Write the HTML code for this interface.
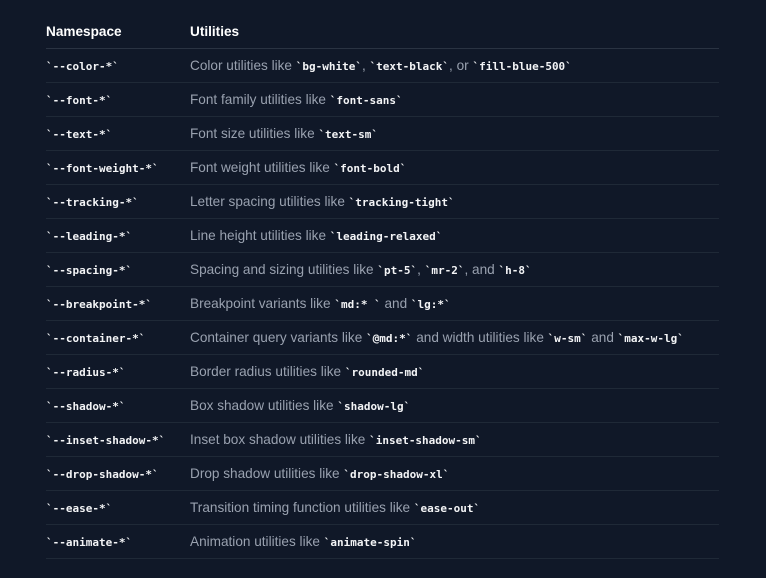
<!DOCTYPE html>
<html><head><meta charset="utf-8"><style>
html,body{margin:0;background:#101828;width:766px;height:578px;overflow:hidden}
table{position:absolute;left:46px;top:14px;width:673px;border-collapse:collapse;font-family:"Liberation Sans",sans-serif;font-size:13.6px;color:#99a1af}
th{color:#fff;font-weight:bold;text-align:left;height:34px;padding:0;border-bottom:1px solid #2a3342;vertical-align:middle}
td{height:33px;padding:0;border-bottom:1px solid #1f2937;vertical-align:middle}
td:first-child,th:first-child{width:144px}
code{font-family:"DejaVu Sans Mono",monospace;font-size:11px;font-weight:bold;color:#f3f4f6}
</style></head><body>
<table>
<tr><th>Namespace</th><th>Utilities</th></tr>
<tr><td><code>`--color-*`</code></td><td>Color utilities like <code>`bg-white`</code>, <code>`text-black`</code>, or <code>`fill-blue-500`</code></td></tr>
<tr><td><code>`--font-*`</code></td><td>Font family utilities like <code>`font-sans`</code></td></tr>
<tr><td><code>`--text-*`</code></td><td>Font size utilities like <code>`text-sm`</code></td></tr>
<tr><td><code>`--font-weight-*`</code></td><td>Font weight utilities like <code>`font-bold`</code></td></tr>
<tr><td><code>`--tracking-*`</code></td><td>Letter spacing utilities like <code>`tracking-tight`</code></td></tr>
<tr><td><code>`--leading-*`</code></td><td>Line height utilities like <code>`leading-relaxed`</code></td></tr>
<tr><td><code>`--spacing-*`</code></td><td>Spacing and sizing utilities like <code>`pt-5`</code>, <code>`mr-2`</code>, and <code>`h-8`</code></td></tr>
<tr><td><code>`--breakpoint-*`</code></td><td>Breakpoint variants like <code>`md:* `</code> and <code>`lg:*`</code></td></tr>
<tr><td><code>`--container-*`</code></td><td>Container query variants like <code>`@md:*`</code> and width utilities like <code>`w-sm`</code> and <code>`max-w-lg`</code></td></tr>
<tr><td><code>`--radius-*`</code></td><td>Border radius utilities like <code>`rounded-md`</code></td></tr>
<tr><td><code>`--shadow-*`</code></td><td>Box shadow utilities like <code>`shadow-lg`</code></td></tr>
<tr><td><code>`--inset-shadow-*`</code></td><td>Inset box shadow utilities like <code>`inset-shadow-sm`</code></td></tr>
<tr><td><code>`--drop-shadow-*`</code></td><td>Drop shadow utilities like <code>`drop-shadow-xl`</code></td></tr>
<tr><td><code>`--ease-*`</code></td><td>Transition timing function utilities like <code>`ease-out`</code></td></tr>
<tr><td><code>`--animate-*`</code></td><td>Animation utilities like <code>`animate-spin`</code></td></tr>
</table>
</body></html>
